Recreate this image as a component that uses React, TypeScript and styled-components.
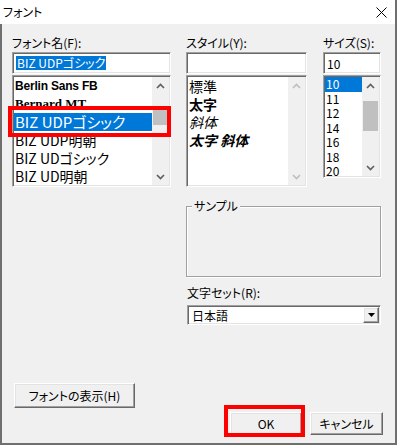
import React from "react";
import styled, { createGlobalStyle } from "styled-components";

const Global = createGlobalStyle`
  html, body { margin: 0; padding: 0; background: #ffffff; }
  body {
    font-family: "Noto Sans CJK JP", "Noto Sans", sans-serif;
    font-size: 12px;
    color: #000;
    font-feature-settings: "palt";
  }
  * { box-sizing: border-box; }
`;

const Window = styled.div`
  width: 397px;
  height: 445px;
  display: flex;
  flex-direction: column;
  border-right: 2px solid #6f6f6f;
  background: #f0f0f0;
`;

const TitleBar = styled.div`
  height: 24px;
  flex: 0 0 24px;
  background: #ffffff;
  display: flex;
  align-items: center;
  justify-content: space-between;
  padding: 0 8px 0 3px;
`;

const Title = styled.span`
  font-size: 12px;
  line-height: 16px;
`;

const Client = styled.div`
  flex: 1;
  display: flex;
  flex-direction: column;
  border-left: 2px solid #6f6f6f;
  border-bottom: 2px solid #6f6f6f;
  padding: 11px 12px 0 10px;
`;

const TopRow = styled.div`
  display: flex;
  gap: 15px;
`;

const Column = styled.div<{ $w: number }>`
  width: ${(p) => p.$w}px;
  display: flex;
  flex-direction: column;
`;

const RightPane = styled.div`
  width: 195px;
  display: flex;
  flex-direction: column;
`;

const SubRow = styled.div`
  display: flex;
  gap: 16px;
`;

const Label = styled.div`
  height: 16px;
  line-height: 16px;
  white-space: nowrap;
  margin-bottom: 1px;
`;

const sunken = `
  border-top: 1px solid #a0a0a0;
  border-left: 1px solid #a0a0a0;
  border-right: 1px solid #ffffff;
  border-bottom: 1px solid #ffffff;
  box-shadow: inset 1px 1px 0 #696969, inset -1px -1px 0 #e3e3e3;
`;

const raised = `
  border-top: 1px solid #ffffff;
  border-left: 1px solid #ffffff;
  border-right: 1px solid #696969;
  border-bottom: 1px solid #696969;
  box-shadow: inset -1px -1px 0 #a0a0a0, inset 1px 1px 0 #e3e3e3;
`;

const TextBox = styled.div`
  height: 22px;
  background: #ffffff;
  ${sunken}
  display: flex;
  align-items: center;
  padding-left: 3px;
  margin-bottom: 1px;
  white-space: nowrap;
  overflow: hidden;
`;

const SelText = styled.span`
  background: #0078d7;
  color: #ffffff;
  line-height: 14px;
  padding: 0 1px;
`;

const ListBox = styled.div<{ $h: number }>`
  position: relative;
  height: ${(p) => p.$h}px;
  background: #ffffff;
  ${sunken}
  padding: 1px;
  display: flex;
`;

const Items = styled.div`
  flex: 1;
  overflow: hidden;
  display: flex;
  flex-direction: column;
`;

const Item = styled.div<{
  $h: number;
  $size: number;
  $sel?: boolean;
  $bold?: boolean;
  $italic?: boolean;
  $family?: string;
  $ls?: number;
}>`
  height: ${(p) => p.$h}px;
  flex: 0 0 ${(p) => p.$h}px;
  line-height: ${(p) => p.$h}px;
  font-size: ${(p) => p.$size}px;
  font-weight: ${(p) => (p.$bold ? 700 : 400)};
  font-style: ${(p) => (p.$italic ? "italic" : "normal")};
  font-family: ${(p) => p.$family || `"Noto Sans CJK JP", sans-serif`};
  letter-spacing: ${(p) => p.$ls || 0}px;
  white-space: nowrap;
  padding-left: 1px;
  background: ${(p) => (p.$sel ? "#0078d7" : "transparent")};
  color: ${(p) => (p.$sel ? "#ffffff" : "#000000")};
`;

const ScrollBar = styled.div`
  width: 17px;
  flex: 0 0 17px;
  display: flex;
  flex-direction: column;
  background: #f0f0f0;
`;

const ArrowBtn = styled.div`
  height: 17px;
  flex: 0 0 17px;
  display: flex;
  align-items: center;
  justify-content: center;
`;

const Track = styled.div`
  flex: 1;
  display: flex;
  flex-direction: column;
`;

const Thumb = styled.div`
  margin: 0 1px;
  background: #c0c0c0;
`;

const RedBox = styled.div`
  position: absolute;
  border: 4px solid #ff0000;
  pointer-events: none;
`;

const Group = styled.div`
  position: relative;
  margin-top: 19px;
  height: 71px;
  border: 1px solid #a0a0a0;
  box-shadow: inset 1px 1px 0 #ffffff, 1px 1px 0 #ffffff;
`;

const GroupLegend = styled.span`
  position: absolute;
  top: -9px;
  left: 5px;
  padding: 0 2px;
  line-height: 16px;
  background: #f0f0f0;
`;

const CharsetLabel = styled(Label)`
  margin-top: 8px;
  margin-bottom: 4px;
  padding-left: 1px;
`;

const Select = styled.div`
  height: 20px;
  margin-left: 1px;
  background: #ffffff;
  ${sunken}
  display: flex;
  align-items: center;
  justify-content: space-between;
  padding: 0 1px 0 4px;
`;

const DropBtn = styled.div`
  width: 16px;
  height: 16px;
  background: #f0f0f0;
  ${raised}
  display: flex;
  align-items: center;
  justify-content: center;
`;

const Button = styled.div<{ $w: number; $h: number }>`
  width: ${(p) => p.$w}px;
  height: ${(p) => p.$h}px;
  background: #f0f0f0;
  ${raised}
  display: flex;
  align-items: center;
  justify-content: center;
  white-space: nowrap;
`;

const DisplayRow = styled.div`
  margin-top: 58px;
  display: flex;
  padding-left: 2px;
`;

const ButtonRow = styled.div`
  margin-top: 4px;
  display: flex;
  justify-content: flex-end;
  gap: 8px;
`;

const Marked = styled.div`
  position: relative;
`;

const Chevron = ({ up, disabled }: { up: boolean; disabled?: boolean }) => (
  <svg width="9" height="6" viewBox="0 0 9 6">
    <polyline
      points={up ? "1,5 4.5,1.5 8,5" : "1,1 4.5,4.5 8,1"}
      fill="none"
      stroke={disabled ? "#bfbfbf" : "#606060"}
      strokeWidth="1.7"
    />
  </svg>
);

const Scroll = ({
  thumbTop,
  thumbH,
  disabled,
}: {
  thumbTop?: number;
  thumbH?: number;
  disabled?: boolean;
}) => (
  <ScrollBar>
    <ArrowBtn>
      <Chevron up disabled={disabled} />
    </ArrowBtn>
    <Track>
      {thumbH ? <Thumb style={{ marginTop: thumbTop, height: thumbH }} /> : null}
    </Track>
    <ArrowBtn>
      <Chevron up={false} disabled={disabled} />
    </ArrowBtn>
  </ScrollBar>
);

export default function App() {
  const sans = `"Noto Sans CJK JP", sans-serif`;
  return (
    <>
      <Global />
      <Window>
        <TitleBar>
          <Title>フォント</Title>
          <svg width="11" height="11" viewBox="0 0 11 11">
            <path d="M0.5 0.5 L10.5 10.5 M10.5 0.5 L0.5 10.5" stroke="#000" strokeWidth="1" />
          </svg>
        </TitleBar>
        <Client>
          <TopRow>
            <Column $w={159}>
              <Label>フォント名(F):</Label>
              <TextBox>
                <SelText>BIZ UDPゴシック</SelText>
              </TextBox>
              <ListBox $h={112}>
                <Items>
                  <Item $h={18} $size={12} $bold $family={`"Liberation Sans", sans-serif`} $ls={-0.2}>
                    Berlin Sans FB
                  </Item>
                  <Item $h={18} $size={13} $bold $family={`"Liberation Serif", serif`}>
                    Bernard MT
                  </Item>
                  <Item $h={18} $size={15} $sel $family={sans}>
                    BIZ UDPゴシック
                  </Item>
                  <Item $h={18} $size={14} $family={sans}>
                    BIZ UDP明朝
                  </Item>
                  <Item $h={18} $size={14} $family={sans}>
                    BIZ UDゴシック
                  </Item>
                  <Item $h={18} $size={14} $family={sans}>
                    BIZ UD明朝
                  </Item>
                </Items>
                <Scroll thumbTop={14} thumbH={17} />
                <RedBox style={{ left: -5, top: 30, width: 163, height: 31 }} />
              </ListBox>
            </Column>
            <RightPane>
              <SubRow>
                <Column $w={121}>
                  <Label>スタイル(Y):</Label>
                  <TextBox />
                  <ListBox $h={112}>
                    <Items>
                      <Item $h={18} $size={14}>標準</Item>
                      <Item $h={18} $size={14} $bold>太字</Item>
                      <Item $h={18} $size={14} $italic>斜体</Item>
                      <Item $h={18} $size={14} $bold $italic>太字 斜体</Item>
                    </Items>
                    <Scroll disabled />
                  </ListBox>
                </Column>
                <Column $w={58}>
                  <Label>サイズ(S):</Label>
                  <TextBox>10</TextBox>
                  <ListBox $h={103}>
                    <Items>
                      <Item $h={14.5} $size={12} $sel>10</Item>
                      <Item $h={14.5} $size={12}>11</Item>
                      <Item $h={14.5} $size={12}>12</Item>
                      <Item $h={14.5} $size={12}>14</Item>
                      <Item $h={14.5} $size={12}>16</Item>
                      <Item $h={14.5} $size={12}>18</Item>
                      <Item $h={14.5} $size={12}>20</Item>
                    </Items>
                    <Scroll thumbTop={7} thumbH={30} />
                  </ListBox>
                </Column>
              </SubRow>
              <Group>
                <GroupLegend>サンプル</GroupLegend>
              </Group>
              <CharsetLabel>文字セット(R):</CharsetLabel>
              <Select>
                <span>日本語</span>
                <DropBtn>
                  <svg width="7" height="4" viewBox="0 0 7 4">
                    <polygon points="0,0 7,0 3.5,4" fill="#000" />
                  </svg>
                </DropBtn>
              </Select>
            </RightPane>
          </TopRow>
          <DisplayRow>
            <Button $w={121} $h={25}>フォントの表示(H)</Button>
          </DisplayRow>
          <ButtonRow>
            <Marked>
              <Button $w={72} $h={23}>OK</Button>
              <RedBox style={{ left: -6, top: -7, width: 81, height: 32 }} />
            </Marked>
            <Button $w={73} $h={23}>キャンセル</Button>
          </ButtonRow>
        </Client>
      </Window>
    </>
  );
}
